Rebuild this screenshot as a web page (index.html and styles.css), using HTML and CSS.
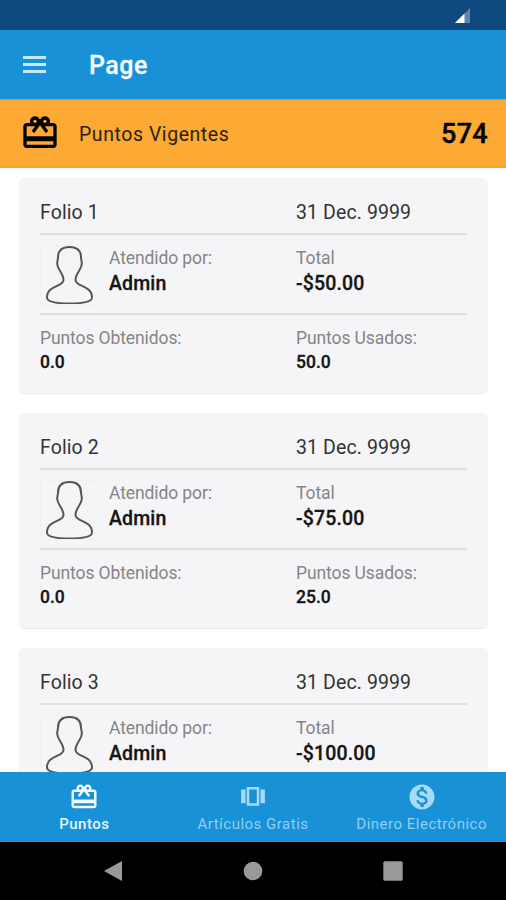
FILE: index.html
```html
<!DOCTYPE html>
<html lang="es">
<head>
    <meta charset="UTF-8">
    <meta name="viewport" content="width=device-width, initial-scale=1.0">
    <title>Page</title>
    <link rel="stylesheet" href="styles.css">
</head>
<body>

    <!-- Shared icons -->
    <svg class="icon-defs">
        <symbol id="icon-redeem" viewBox="0 0 24 24">
            <path d="M20 6h-2.18c.11-.31.18-.65.18-1 0-1.66-1.34-3-3-3-1.05 0-1.96.54-2.5 1.35l-.5.67-.5-.68C10.96 2.54 10.05 2 9 2 7.34 2 6 3.34 6 5c0 .35.07.69.18 1H4c-1.11 0-1.99.89-1.99 2L2 19c0 1.11.89 2 2 2h16c1.11 0 2-.89 2-2V8c0-1.11-.89-2-2-2zm-5-2c.55 0 1 .45 1 1s-.45 1-1 1-1-.45-1-1 .45-1 1-1zM9 4c.55 0 1 .45 1 1s-.45 1-1 1-1-.45-1-1 .45-1 1-1zm11 15H4v-2h16v2zm0-5H4V8h5.08L7 10.83 8.62 12 11 8.76l1-1.36 1 1.36L15.38 12 17 10.83 14.92 8H20v6z"/>
        </symbol>
        <symbol id="icon-person" viewBox="0 0 57 58">
            <path d="M28.500 1C20 1 17 5 17 11.500c0 2-1 4-.8 6.500.3 6 6.300 9 6.300 16 0 7-16.500 5-16.500 17.500 0 4.500 9 6 22.500 6s22.500-1.500 22.500-6C51 39 34.500 41 34.500 34c0-7 6-10 6.300-16 .2-2.500-.8-4.500-.8-6.500C40 5 37 1 28.500 1z"/>
        </symbol>
    </svg>

    <div class="screen">
        <!-- Status bar -->
        <div class="status-bar">
            <svg class="signal" viewBox="0 0 15 15">
                <path d="M0 15L15 0v15z" fill="#5f85ac"/>
                <path d="M0 15L9.500 5.500V15z" fill="#fff"/>
            </svg>
        </div>

        <!-- Header -->
        <header class="header">
            <div class="menu-button">
                <span></span>
                <span></span>
                <span></span>
            </div>
            <h1>Page</h1>
        </header>

        <div class="points">
            <svg class="points-icon"><use href="#icon-redeem"/></svg>
            <span class="points-label">Puntos Vigentes</span>
            <span class="points-total">574</span>
        </div>

        <!-- Main Content -->
        <main class="content">
            <div class="card">
                <div class="row row-title">
                    <span>Folio 1</span>
                    <span>31 Dec. 9999</span>
                </div>
                <div class="row row-person">
                    <div class="person">
                        <svg class="avatar"><use href="#icon-person"/></svg>
                        <div>
                            <p class="label">Atendido por:</p>
                            <p class="value">Admin</p>
                        </div>
                    </div>
                    <div>
                        <p class="label">Total</p>
                        <p class="value">-$50.00</p>
                    </div>
                </div>
                <div class="row row-points">
                    <div>
                        <p class="label">Puntos Obtenidos:</p>
                        <p class="value">0.0</p>
                    </div>
                    <div>
                        <p class="label">Puntos Usados:</p>
                        <p class="value">50.0</p>
                    </div>
                </div>
            </div>

            <div class="card">
                <div class="row row-title">
                    <span>Folio 2</span>
                    <span>31 Dec. 9999</span>
                </div>
                <div class="row row-person">
                    <div class="person">
                        <svg class="avatar"><use href="#icon-person"/></svg>
                        <div>
                            <p class="label">Atendido por:</p>
                            <p class="value">Admin</p>
                        </div>
                    </div>
                    <div>
                        <p class="label">Total</p>
                        <p class="value">-$75.00</p>
                    </div>
                </div>
                <div class="row row-points">
                    <div>
                        <p class="label">Puntos Obtenidos:</p>
                        <p class="value">0.0</p>
                    </div>
                    <div>
                        <p class="label">Puntos Usados:</p>
                        <p class="value">25.0</p>
                    </div>
                </div>
            </div>

            <div class="card">
                <div class="row row-title">
                    <span>Folio 3</span>
                    <span>31 Dec. 9999</span>
                </div>
                <div class="row row-person">
                    <div class="person">
                        <svg class="avatar"><use href="#icon-person"/></svg>
                        <div>
                            <p class="label">Atendido por:</p>
                            <p class="value">Admin</p>
                        </div>
                    </div>
                    <div>
                        <p class="label">Total</p>
                        <p class="value">-$100.00</p>
                    </div>
                </div>
            </div>
        </main>

        <!-- Bottom tabs -->
        <nav class="tabs">
            <a class="tab active">
                <svg><use href="#icon-redeem"/></svg>
                <span>Puntos</span>
            </a>
            <a class="tab">
                <svg viewBox="0 0 24 24"><path d="M7 4v15h10V4H7zm8 13H9V6h6v11zM2.500 6H6v11H2.500zM18 6h3.500v11H18z"/></svg>
                <span>Artículos Gratis</span>
            </a>
            <a class="tab">
                <svg viewBox="0 0 24 24"><path d="M12 2C6.480 2 2 6.480 2 12s4.480 10 10 10 10-4.480 10-10S17.520 2 12 2zm1.410 16.090V20h-2.670v-1.930c-1.710-.36-3.160-1.460-3.270-3.400h1.960c.1 1.050.82 1.870 2.650 1.870 1.960 0 2.400-.98 2.400-1.590 0-.83-.44-1.610-2.670-2.140-2.480-.6-4.180-1.620-4.180-3.670 0-1.720 1.390-2.840 3.110-3.210V4h2.670v1.950c1.860.45 2.790 1.860 2.850 3.390H14.300c-.05-1.110-.64-1.870-2.220-1.870-1.500 0-2.400.68-2.400 1.640 0 .84.65 1.390 2.670 1.910s4.180 1.390 4.180 3.910c-.01 1.830-1.380 2.830-3.120 3.160z"/></svg>
                <span>Dinero Electrónico</span>
            </a>
        </nav>

        <!-- System buttons -->
        <div class="system-bar">
            <svg viewBox="0 0 22 22"><path d="M20 1v20L2 11z"/></svg>
            <svg viewBox="0 0 22 22"><circle cx="11" cy="11" r="9.300"/></svg>
            <svg viewBox="0 0 22 22"><rect x="1.300" y="1.300" width="19.400" height="19.400" rx="1.500"/></svg>
        </div>
    </div>

</body>
</html>
```
FILE: styles.css
```css
* {
    box-sizing: border-box;
}

body {
    margin: 0;
    font-family: Roboto, sans-serif;
    background-color: #fff;
}

.icon-defs {
    display: none;
}

.screen {
    display: flex;
    flex-direction: column;
    height: 900px;
    overflow: hidden;
}

/* Status bar */
.status-bar {
    flex: none;
    display: flex;
    justify-content: flex-end;
    height: 30px;
    padding: 8px 36px 0 0;
    background-color: #10497e;
}

.signal {
    width: 15px;
    height: 15px;
}

/* Header */
.header {
    flex: none;
    display: flex;
    align-items: center;
    height: 69px;
    padding: 0 23px;
    background-color: #1991d7;
    color: #f4fbff;
}

.header h1 {
    margin: 3px 0 0 43px;
    font-size: 25px;
    line-height: 30px;
    font-weight: 500;
    letter-spacing: 0.5px;
    -webkit-text-stroke: 0.3px;
}

.menu-button {
    display: flex;
    flex-direction: column;
    gap: 4px;
    width: 23px;
}

.menu-button span {
    height: 3px;
    background-color: #c9e6fa;
}

/* Current points */
.points {
    flex: none;
    display: flex;
    align-items: center;
    height: 69px;
    padding: 0 18px 0 20px;
    background-color: #fcaa34;
    border-top: 1px solid #c79b48;
    border-bottom: 2px solid #f6a328;
    color: #000;
}

.points-icon {
    width: 40px;
    height: 40px;
}

.points-label {
    margin: 3px 0 0 19px;
    font-size: 19.500px;
    letter-spacing: 0.55px;
    color: #2d210d;
}

.points-total {
    margin: 2px 0 0 auto;
    font-size: 27px;
    font-weight: 500;
    letter-spacing: 0.3px;
    -webkit-text-stroke: 0.4px;
}

/* Main Content */
.content {
    flex: 1;
    min-height: 0;
    overflow: hidden;
    padding: 10px 18px 0 19px;
}

.card {
    height: 215px;
    margin-bottom: 20px;
    padding: 0 21px;
    background-color: #f5f5f7;
    border-radius: 5px;
    box-shadow: 0 1px 1px rgba(0, 0, 0, 0.08);
}

.row {
    display: grid;
    grid-template-columns: 256px 1fr;
}

.row p {
    margin: 0;
}

.row-title {
    height: 57px;
    padding-top: 23px;
    border-bottom: 2px solid #dedee0;
    font-size: 19.500px;
    line-height: 24px;
    letter-spacing: 0.1px;
    color: #333;
}

.row-person {
    height: 80px;
    padding-top: 10px;
    border-bottom: 2px solid #dedee0;
}

.person {
    display: flex;
    gap: 10px;
}

.avatar {
    width: 59px;
    height: 60px;
    border: 1px solid #f0f0f2;
    fill: none;
    stroke: #555;
    stroke-width: 2;
}

.label {
    font-size: 17.500px;
    line-height: 26px;
    letter-spacing: -0.1px;
    color: #858587;
}

.value {
    font-size: 19.500px;
    line-height: 25px;
    font-weight: 500;
    letter-spacing: 0.15px;
    -webkit-text-stroke: 0.3px;
    color: #151515;
}

.row-points {
    padding-top: 10px;
}

.row-points .value {
    font-size: 17.500px;
    line-height: 22px;
    letter-spacing: 0;
}

/* Bottom tabs */
.tabs {
    flex: none;
    display: grid;
    grid-template-columns: repeat(3, 1fr);
    height: 70px;
    background-color: #1991d7;
}

.tab {
    display: flex;
    flex-direction: column;
    align-items: center;
    padding-top: 10px;
    font-size: 15px;
    line-height: 20px;
    letter-spacing: 0.5px;
    white-space: nowrap;
    color: #91cff4;
}

.tab svg {
    width: 30px;
    height: 30px;
    margin-bottom: 2px;
    fill: #a8dafa;
}

.tab.active {
    font-weight: 500;
    color: #e8f6ff;
}

.tab.active svg {
    fill: #f0faff;
}

/* System buttons */
.system-bar {
    flex: none;
    display: flex;
    justify-content: center;
    gap: 118px;
    height: 58px;
    padding-top: 18px;
    background-color: #000;
}

.system-bar svg {
    width: 22px;
    height: 22px;
    fill: #999;
}
```
